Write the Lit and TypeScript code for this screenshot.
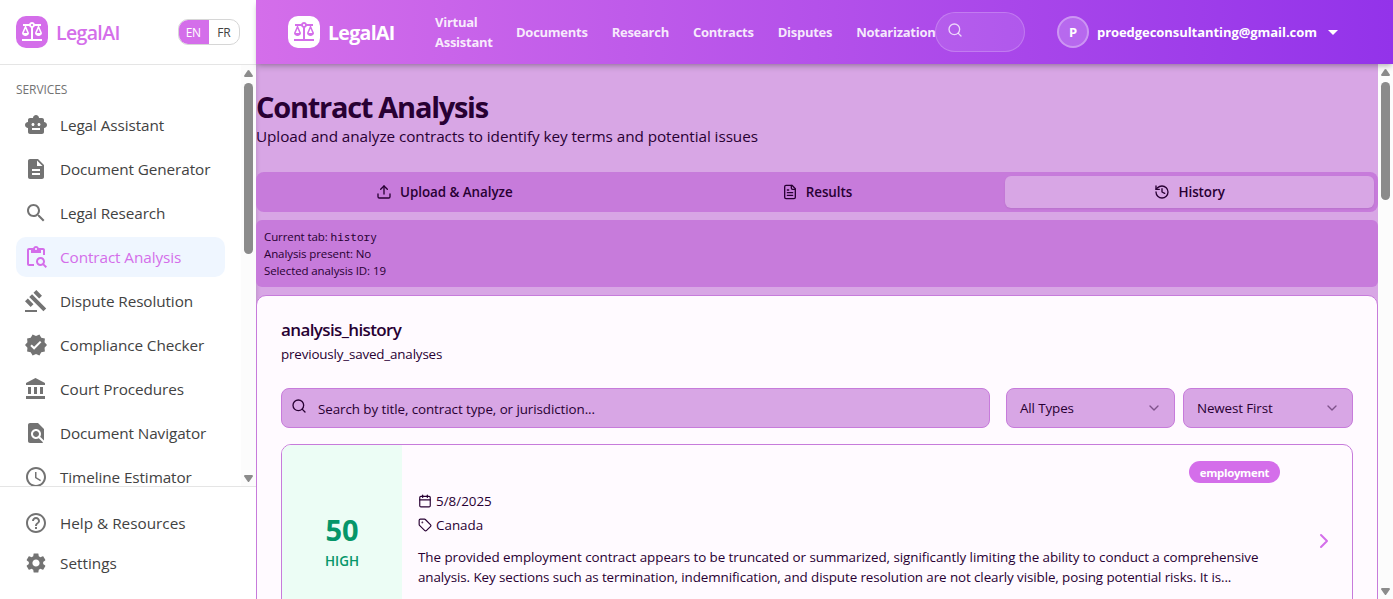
import { LitElement, html, css, svg } from "lit";
import { customElement, property } from "lit/decorators.js";
import { classMap } from "lit/directives/class-map.js";

const filled: Record<string, string> = {
  balance:
    "M13 7.83c.85-.3 1.53-.98 1.83-1.83H18l-3 7c0 1.66 1.57 3 3.5 3s3.5-1.34 3.5-3l-3-7h2V4h-6.17c-.41-1.17-1.52-2-2.83-2s-2.42.83-2.83 2H3v2h2l-3 7c0 1.66 1.57 3 3.5 3S9 14.66 9 13L6 6h3.17c.3.85.98 1.53 1.83 1.83V19H2v2h20v-2h-9V7.83zM20.37 13h-3.74l1.87-4.36L20.37 13zm-13 0H3.63L5.5 8.64 7.37 13zM12 6c-.55 0-1-.45-1-1s.45-1 1-1 1 .45 1 1-.45 1-1 1z",
  robot:
    "M20 9V7c0-1.1-.9-2-2-2h-3c0-1.66-1.34-3-3-3S9 3.34 9 5H6c-1.1 0-2 .9-2 2v2c-1.66 0-3 1.34-3 3s1.34 3 3 3v4c0 1.1.9 2 2 2h12c1.1 0 2-.9 2-2v-4c1.66 0 3-1.34 3-3s-1.34-3-3-3zM7.5 11.5c0-.83.67-1.5 1.5-1.5s1.5.67 1.5 1.5S9.83 13 9 13s-1.5-.67-1.5-1.5zM16 17H8v-2h8v2zm-1-4c-.83 0-1.5-.67-1.5-1.5S14.17 10 15 10s1.5.67 1.5 1.5S15.83 13 15 13z",
  description:
    "M14 2H6c-1.1 0-1.99.9-1.99 2L4 20c0 1.1.89 2 1.99 2H18c1.1 0 2-.9 2-2V8l-6-6zm2 16H8v-2h8v2zm0-4H8v-2h8v2zm-3-5V3.5L18.5 9H13z",
  research:
    "M15.5 14h-.79l-.28-.27C15.41 12.59 16 11.11 16 9.5 16 5.91 13.09 3 9.5 3S3 5.91 3 9.5 5.91 16 9.5 16c1.61 0 3.09-.59 4.23-1.57l.27.28v.79l5 4.99L20.49 19l-4.99-5zm-6 0C7.01 14 5 11.99 5 9.5S7.01 5 9.5 5 14 7.01 14 9.5 11.99 14 9.5 14z",
  contract:
    "M5 5h2v3h10V5h2v5h2V5c0-1.1-.9-2-2-2h-4.18C14.4 1.84 13.3 1 12 1s-2.4.84-2.82 2H5c-1.1 0-2 .9-2 2v14c0 1.1.9 2 2 2h5v-2H5V5zm7-2c.55 0 1 .45 1 1s-.45 1-1 1-1-.45-1-1 .45-1 1-1zM20.3 18.9c.4-.7.7-1.5.7-2.4 0-2.5-2-4.5-4.5-4.5S12 14 12 16.5s2 4.5 4.5 4.5c.9 0 1.7-.3 2.4-.7l2.7 2.7 1.4-1.4-2.7-2.7zm-3.8.1c-1.4 0-2.5-1.1-2.5-2.5s1.1-2.5 2.5-2.5 2.5 1.1 2.5 2.5-1.1 2.5-2.5 2.5z",
  gavel:
    "M1 21h12v2H1zM5.245 8.07l2.83-2.827 14.14 14.142-2.828 2.828zM12.317 1l5.657 5.656-2.83 2.83-5.654-5.66zM3.825 9.485l5.657 5.657-2.828 2.828-5.657-5.657z",
  verified:
    "M23 12l-2.44-2.79.34-3.69-3.61-.82-1.89-3.2L12 2.96 8.6 1.5 6.71 4.69 3.1 5.5l.34 3.7L1 12l2.44 2.79-.34 3.7 3.61.82L8.6 22.5l3.4-1.47 3.4 1.46 1.89-3.19 3.61-.82-.34-3.69L23 12zm-12.91 4.72l-3.8-3.81 1.48-1.48 2.32 2.33 5.85-5.87 1.48 1.48-7.33 7.35z",
  court:
    "M4 10v7h3v-7H4zm6 0v7h3v-7h-3zM2 22h19v-3H2v3zm14-12v7h3v-7h-3zm-4.5-9L2 6v2h19V6l-9.5-5z",
  navigator:
    "M20 19.59V8l-6-6H6c-1.1 0-1.99.9-1.99 2L4 20c0 1.1.89 2 1.99 2H18c.45 0 .85-.15 1.19-.4l-4.43-4.43c-.8.52-1.74.83-2.76.83-2.76 0-5-2.24-5-5s2.24-5 5-5 5 2.24 5 5c0 1.02-.31 1.96-.83 2.75L20 19.59zM9 13c0 1.66 1.34 3 3 3s3-1.34 3-3-1.34-3-3-3-3 1.34-3 3z",
  schedule:
    "M11.99 2C6.47 2 2 6.48 2 12s4.47 10 9.99 10C17.52 22 22 17.52 22 12S17.52 2 11.99 2zM12 20c-4.42 0-8-3.58-8-8s3.58-8 8-8 8 3.58 8 8-3.58 8-8 8zM12.5 7H11v6l5.25 3.15.75-1.23-4.5-2.67z",
  help: "M11 18h2v-2h-2v2zm1-16C6.48 2 2 6.48 2 12s4.48 10 10 10 10-4.48 10-10S17.52 2 12 2zm0 18c-4.41 0-8-3.59-8-8s3.59-8 8-8 8 3.59 8 8-3.59 8-8 8zm0-14c-2.21 0-4 1.79-4 4h2c0-1.1.9-2 2-2s2 .9 2 2c0 2-3 1.75-3 5h2c0-2.25 3-2.5 3-5 0-2.21-1.79-4-4-4z",
  settings:
    "M19.14 12.94c.04-.3.06-.61.06-.94 0-.32-.02-.64-.07-.94l2.03-1.58c.18-.14.23-.41.12-.61l-1.92-3.32c-.12-.22-.37-.29-.59-.22l-2.39.96c-.5-.38-1.03-.7-1.62-.94l-.36-2.54c-.04-.24-.24-.41-.48-.41h-3.84c-.24 0-.43.17-.47.41l-.36 2.54c-.59.24-1.13.57-1.62.94l-2.39-.96c-.22-.08-.47 0-.59.22L2.74 8.87c-.12.21-.08.47.12.61l2.03 1.58c-.05.3-.09.63-.09.94s.02.64.07.94l-2.03 1.58c-.18.14-.23.41-.12.61l1.92 3.32c.12.22.37.29.59.22l2.39-.96c.5.38 1.03.7 1.62.94l.36 2.54c.05.24.24.41.48.41h3.84c.24 0 .44-.17.47-.41l.36-2.54c.59-.24 1.13-.56 1.62-.94l2.39.96c.22.08.47 0 .59-.22l1.92-3.32c.12-.22.07-.47-.12-.61l-2.01-1.58zM12 15.6c-1.98 0-3.6-1.62-3.6-3.6s1.62-3.6 3.6-3.6 3.6 1.62 3.6 3.6-1.62 3.6-3.6 3.6z",
  dropdown: "M7 10l5 5 5-5z",
};

const lined: Record<string, unknown> = {
  search: svg`<circle cx="11" cy="11" r="8"/><path d="m21 21-4.3-4.3"/>`,
  upload: svg`<path d="M21 15v4a2 2 0 0 1-2 2H5a2 2 0 0 1-2-2v-4"/><path d="m17 8-5-5-5 5"/><path d="M12 3v12"/>`,
  file: svg`<path d="M15 2H6a2 2 0 0 0-2 2v16a2 2 0 0 0 2 2h12a2 2 0 0 0 2-2V7Z"/><path d="M14 2v4a2 2 0 0 0 2 2h4"/><path d="M10 9H8"/><path d="M16 13H8"/><path d="M16 17H8"/>`,
  history: svg`<path d="M3 12a9 9 0 1 0 9-9 9.75 9.75 0 0 0-6.74 2.74L3 8"/><path d="M3 3v5h5"/><path d="M12 7v5l4 2"/>`,
  calendar: svg`<path d="M8 2v4"/><path d="M16 2v4"/><rect width="18" height="18" x="3" y="4" rx="2"/><path d="M3 10h18"/>`,
  tag: svg`<path d="M12.586 2.586A2 2 0 0 0 11.172 2H4a2 2 0 0 0-2 2v7.172a2 2 0 0 0 .586 1.414l8.704 8.704a2.426 2.426 0 0 0 3.42 0l6.58-6.58a2.426 2.426 0 0 0 0-3.42z"/><circle cx="7.5" cy="7.5" r=".5" fill="currentColor"/>`,
  down: svg`<path d="m6 9 6 6 6-6"/>`,
  right: svg`<path d="m9 18 6-6-6-6"/>`,
};

@customElement("ui-icon")
class UiIcon extends LitElement {
  @property() name = "";
  static styles = css`
    :host { display: block; flex: none; width: 24px; height: 24px; }
    svg { display: block; width: 100%; height: 100%; }
    .lined { fill: none; stroke: currentColor; stroke-width: 2; stroke-linecap: round; stroke-linejoin: round; }
    .filled { fill: currentColor; }
  `;
  render() {
    return this.name in filled
      ? html`<svg class="filled" viewBox="0 0 24 24"><path d=${filled[this.name]} /></svg>`
      : html`<svg class="lined" viewBox="0 0 24 24">${lined[this.name]}</svg>`;
  }
}

@customElement("scroll-rail")
class ScrollRail extends LitElement {
  static styles = css`
    :host { display: flex; flex-direction: column; align-items: center; box-sizing: border-box; width: 15px; flex: none; background: #fcfcfc; padding: 5px 0 4px; }
    svg { display: block; width: 9px; height: 7px; fill: #8b8b8b; flex: none; }
    .track { flex: 1; width: 9px; padding-top: 6px; }
    .thumb { height: var(--thumb); border-radius: 5px; background: #8b8b8b; }
  `;
  render() {
    return html`
      <svg viewBox="0 0 9 7"><path d="M3.7.6Q4.5-.4 5.3.6L8.8 5.4Q9.2 7 8 7H1Q-.2 7 .2 5.4Z" /></svg>
      <div class="track"><div class="thumb"></div></div>
      <svg viewBox="0 0 9 7"><path d="M3.7 6.4Q4.5 7.4 5.3 6.4L8.8 1.6Q9.2 0 8 0H1Q-.2 0 .2 1.6Z" /></svg>
    `;
  }
}

@customElement("side-bar")
class SideBar extends LitElement {
  static styles = css`
    :host { display: flex; flex-direction: column; width: 256px; flex: none; background: #fff; color: #424242; }
    .top { display: flex; align-items: center; height: 64px; padding: 0 16px; border-bottom: 1px solid #e5e5e5; flex: none; }
    .logo { display: grid; place-items: center; width: 32px; height: 32px; border-radius: 10px; background: #d46eea; color: #fff; }
    .brand { margin-left: 8px; font-size: 19.5px; font-weight: 600; letter-spacing: -0.65px; color: #d46eea; flex: 1; line-height: 28px; padding-top: 2px; }
    .lang { display: flex; box-sizing: border-box; width: 62px; height: 26px; border: 1px solid #d6d6d6; border-radius: 10px; overflow: hidden; font-size: 12px; line-height: 26px; text-align: center; letter-spacing: -0.4px; }
    .lang span { flex: 1; }
    .lang .on { background: #d46eea; color: #fff; margin: -1px 0 -1px -1px; line-height: 28px; }
    .scroll { display: flex; flex: 1; min-height: 0; overflow: hidden; }
    .services { flex: 1; padding: 16px 16px 0; overflow: hidden; }
    .label { font-size: 12px; line-height: 16px; font-weight: 500; letter-spacing: -0.08px; color: #737373; margin-bottom: 8px; padding-top: 1px; height: 15px; }
    .item { display: flex; align-items: center; gap: 12px; height: 40px; padding: 0 8px; border-radius: 10px; font-size: 15.3px; letter-spacing: -0.09px; margin-bottom: 4px; white-space: nowrap; }
    .item ui-icon { color: #737373; }
    .item.on { background: #eff6ff; color: #d46eea; }
    .item.on ui-icon { color: #d46eea; }
    .bottom { border-top: 1px solid #e5e5e5; padding: 16px 16px; flex: none; }
    .bottom .item { margin: 0; letter-spacing: 0; }
    scroll-rail { --thumb: 171px; }
  `;
  render() {
    const items = [
      ["robot", "Legal Assistant"],
      ["description", "Document Generator"],
      ["research", "Legal Research"],
      ["contract", "Contract Analysis"],
      ["gavel", "Dispute Resolution"],
      ["verified", "Compliance Checker"],
      ["court", "Court Procedures"],
      ["navigator", "Document Navigator"],
      ["schedule", "Timeline Estimator"],
    ];
    const row = ([icon, text]: string[]) =>
      html`<div class=${classMap({ item: true, on: icon === "contract" })}>
        <ui-icon name=${icon}></ui-icon><span>${text}</span>
      </div>`;
    return html`
      <div class="top">
        <div class="logo"><ui-icon name="balance"></ui-icon></div>
        <div class="brand">LegalAI</div>
        <div class="lang"><span class="on">EN</span><span>FR</span></div>
      </div>
      <div class="scroll">
        <div class="services">
          <div class="label">SERVICES</div>
          ${items.map(row)}
        </div>
        <scroll-rail></scroll-rail>
      </div>
      <div class="bottom">${[["help", "Help & Resources"], ["settings", "Settings"]].map(row)}</div>
    `;
  }
}

@customElement("top-bar")
class TopBar extends LitElement {
  static styles = css`
    :host { display: flex; align-items: center; box-sizing: border-box; height: 64px; flex: none; padding: 0 40px 0 32px; color: #fff;
      background: linear-gradient(to right, #d46eea, #9333ea); box-shadow: 0 4px 6px -1px rgba(0,0,0,.18), 0 2px 4px -2px rgba(0,0,0,.18); position: relative; }
    .logo { display: grid; place-items: center; width: 32px; height: 32px; border-radius: 10px; background: #fff; color: #d46eea; flex: none; }
    .brand { margin-left: 8px; width: 67px; flex: none; font-size: 19.5px; line-height: 28px; font-weight: 700; letter-spacing: -0.65px; padding-top: 2px; }
    nav { display: flex; align-items: center; gap: 24px; margin-left: 40px; width: 500px; flex: none; font-size: 13px; line-height: 20px; font-weight: 700; color: rgba(255,255,255,.88); letter-spacing: -0.26px; }
    nav span { flex: none; }
    .two { width: 57px; }
    .search { box-sizing: border-box; width: 90px; height: 40px; border-radius: 20px; border: 1px solid rgba(255,255,255,.2); background: rgba(255,255,255,.1); padding: 9px 11px; color: rgba(255,255,255,.75); flex: none; }
    .search ui-icon { width: 16px; height: 16px; }
    .avatar { box-sizing: border-box; width: 32px; height: 32px; margin-left: 32px; border: 2px solid rgba(255,255,255,.3); border-radius: 50%; background: rgba(255,255,255,.2); display: grid; place-items: center; font-size: 13px; font-weight: 700; flex: none; }
    .mail { margin-left: 8px; width: 220px; font-size: 13px; font-weight: 700; letter-spacing: -0.06px; white-space: nowrap; flex: none; }
    .arrow { margin-left: 4px; }
  `;
  render() {
    return html`
      <div class="logo"><ui-icon name="balance"></ui-icon></div>
      <div class="brand">LegalAI</div>
      <nav>
        <span class="two">Virtual<br />Assistant</span>
        ${["Documents", "Research", "Contracts", "Disputes", "Notarization"].map((t) => html`<span>${t}</span>`)}
      </nav>
      <div class="search"><ui-icon name="search"></ui-icon></div>
      <div class="avatar">P</div>
      <div class="mail">proedgeconsultanting@gmail.com</div>
      <ui-icon class="arrow" name="dropdown"></ui-icon>
    `;
  }
}

@customElement("contract-page")
class ContractPage extends LitElement {
  static styles = css`
    :host { display: block; box-sizing: border-box; flex: 1; min-width: 0; overflow: hidden; background: #d8a6e5; color: #280033; padding-top: 24px; box-shadow: inset 4px 0 4px -3px rgba(0,0,0,.12); }
    h1 { margin: 0; font-size: 29px; line-height: 36px; font-weight: 700; letter-spacing: -1.27px; padding-top: 1px; height: 35px; }
    .lead { font-size: 15.3px; line-height: 24px; height: 24px; margin-bottom: 24px; letter-spacing: -0.07px; white-space: nowrap; }
    .tabs { box-sizing: border-box; display: grid; grid-template-columns: repeat(3, 1fr); gap: 4px; height: 40px; margin-bottom: 8px; padding: 4px; border-radius: 8px; background: #c77bdb; font-size: 13.4px; font-weight: 600; }
    .tab { display: flex; align-items: center; justify-content: center; gap: 8px; border-radius: 6px; letter-spacing: -0.05px; }
    .tab.on { background: #d8a6e5; box-shadow: 0 1px 2px rgba(0,0,0,.08); }
    .tab ui-icon { width: 16px; height: 16px; }
    .debug { padding: 8px; margin-bottom: 8px; border-radius: 6px; background: #c77bdb; font-size: 11.5px; line-height: 17px; letter-spacing: -0.1px; }
    .debug code { font-family: "Noto Sans Mono", "DejaVu Sans Mono", monospace; font-size: 11px; letter-spacing: 0; }
    .card { border: 1px solid #c77bdb; border-radius: 10px; background: #fffaff; padding: 24px; height: 500px; }
    .title { font-size: 17px; line-height: 20px; font-weight: 600; letter-spacing: -0.62px; }
    .sub { margin-top: 4px; font-size: 13.4px; line-height: 20px; letter-spacing: -0.17px; margin-bottom: 24px; }
    .filters { display: flex; gap: 8px; height: 40px; margin-bottom: 16px; font-size: 13.4px; }
    .field { box-sizing: border-box; display: flex; align-items: center; border: 1px solid #c77bdb; border-radius: 8px; background: #d8a6e5; }
    .search { flex: 1; margin-right: 8px; padding: 0 9px; gap: 11px; letter-spacing: -0.08px; }
    .search span { padding-top: 2px; }
    .search ui-icon { width: 16px; height: 16px; margin-bottom: 4px; }
    .select { justify-content: space-between; width: 169px; padding: 0 12px 0 13px; letter-spacing: -0.12px; }
    .select.wide { width: 170px; }
    .select ui-icon { width: 16px; height: 16px; opacity: .5; }
    .entry { box-sizing: border-box; display: flex; height: 194px; border: 1px solid #c77bdb; border-radius: 10px; overflow: hidden; }
    .score { width: 120px; flex: none; display: flex; flex-direction: column; align-items: center; justify-content: center; background: #ecfdf5; color: #059669; }
    .num { font-size: 29px; line-height: 36px; font-weight: 700; padding-top: 1px; }
    .level { font-size: 13.4px; line-height: 20px; font-weight: 600; margin-top: 3px; }
    .info { flex: 1; min-width: 0; padding: 16px; font-size: 13.4px; line-height: 20px; display: flex; flex-direction: column; }
    .badge { align-self: flex-end; box-sizing: border-box; width: 91px; height: 22px; border-radius: 11px; background: #d46eea; color: #fff; text-align: center; font-size: 11.4px; font-weight: 700; line-height: 24px; letter-spacing: -0.3px; }
    .meta { display: flex; align-items: center; gap: 4px; height: 20px; margin-top: 4px; }
    .meta.first { margin-top: 8px; }
    .meta ui-icon { width: 14px; height: 14px; }
    .text { margin-top: 12px; white-space: nowrap; }
    .l1 { letter-spacing: -0.052px; }
    .l2 { letter-spacing: -0.093px; }
    .open { width: 56px; flex: none; display: flex; align-items: center; padding-left: 16px; box-sizing: border-box; color: #d46eea; }
  `;
  render() {
    return html`
      <h1>Contract Analysis</h1>
      <div class="lead">Upload and analyze contracts to identify key terms and potential issues</div>
      <div class="tabs">
        <div class="tab"><ui-icon name="upload"></ui-icon>Upload &amp; Analyze</div>
        <div class="tab"><ui-icon name="file"></ui-icon>Results</div>
        <div class="tab on"><ui-icon name="history"></ui-icon>History</div>
      </div>
      <div class="debug">
        <div>Current tab: <code>history</code></div>
        <div>Analysis present: No</div>
        <div>Selected analysis ID: 19</div>
      </div>
      <div class="card">
        <div class="title">analysis_history</div>
        <div class="sub">previously_saved_analyses</div>
        <div class="filters">
          <div class="field search"><ui-icon name="search"></ui-icon><span>Search by title, contract type, or jurisdiction...</span></div>
          <div class="field select"><span>All Types</span><ui-icon name="down"></ui-icon></div>
          <div class="field select wide"><span>Newest First</span><ui-icon name="down"></ui-icon></div>
        </div>
        <div class="entry">
          <div class="score"><div class="num">50</div><div class="level">HIGH</div></div>
          <div class="info">
            <div class="badge">employment</div>
            <div class="meta first"><ui-icon name="calendar"></ui-icon><span>5/8/2025</span></div>
            <div class="meta"><ui-icon name="tag"></ui-icon><span>Canada</span></div>
            <div class="text">
              <span class="l1">The provided employment contract appears to be truncated or summarized, significantly limiting the ability to conduct a comprehensive</span><br />
              <span class="l2">analysis. Key sections such as termination, indemnification, and dispute resolution are not clearly visible, posing potential risks. It is...</span>
            </div>
          </div>
          <div class="open"><ui-icon name="right"></ui-icon></div>
        </div>
      </div>
    `;
  }
}

@customElement("app-root")
class AppRoot extends LitElement {
  static styles = css`
    :host { display: flex; height: 599px; overflow: hidden; font-family: "Open Sans", "Noto Sans", sans-serif; font-size: 14px; }
    .right { flex: 1; min-width: 0; display: flex; flex-direction: column; }
    .view { flex: 1; min-height: 0; display: flex; }
    scroll-rail { --thumb: 118px; }
    top-bar { z-index: 1; }
  `;
  render() {
    return html`
      <side-bar></side-bar>
      <div class="right">
        <top-bar></top-bar>
        <div class="view"><contract-page></contract-page><scroll-rail></scroll-rail></div>
      </div>
    `;
  }
}
